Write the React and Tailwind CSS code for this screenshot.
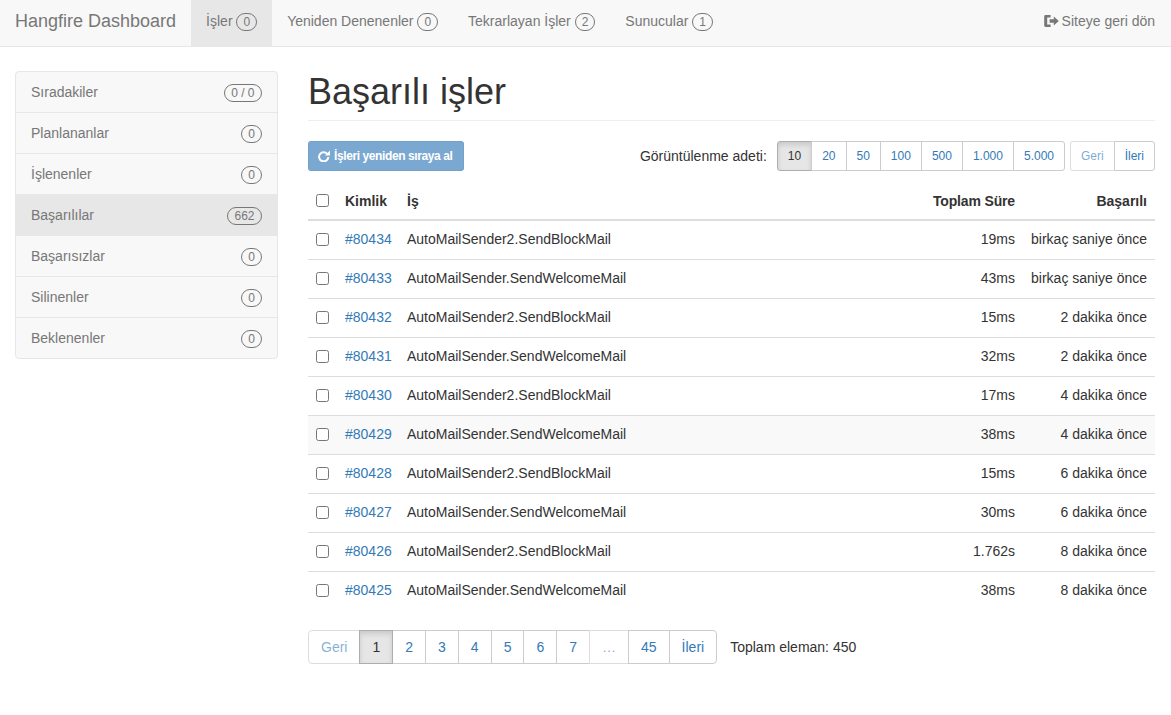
import React from "react";

const Badge = ({ children }) => (
  <span className={`mt-[2px] inline-block min-w-[10px] rounded-[10px] border border-[#777] bg-transparent py-0 text-center text-[12px] leading-[16px] text-[#777] ${String(children).length > 1 ? "px-[6.5px]" : "px-[6px]"}`}>
    {children}
  </span>
);

const LogOut = () => (
  <svg width="15" height="14" viewBox="0 0 15 14" className="mb-[1px] inline-block" fill="#777">
    <path d="M1.6 1h5v2.4H3.2v7.2h3.4V13h-5a1.4 1.4 0 0 1-1.4-1.4V2.4A1.4 1.4 0 0 1 1.6 1z" />
    <path d="M5.6 5.2h4.2V2.6L14.8 7l-5 4.4V8.8H5.6z" />
  </svg>
);

const Repeat = () => (
  <svg width="12" height="12" viewBox="0 0 12 12" className="inline-block" fill="none">
    <path d="M9.6 4.3A4.6 4.6 0 1 0 10.3 7" stroke="#fff" strokeWidth="2" />
    <path d="M12 .6v5H7z" fill="#fff" />
  </svg>
);

const nav = [
  ["İşler", "0", true],
  ["Yeniden Denenenler", "0"],
  ["Tekrarlayan İşler", "2"],
  ["Sunucular", "1"],
];

const side = [
  ["Sıradakiler", "0 / 0"],
  ["Planlananlar", "0"],
  ["İşlenenler", "0"],
  ["Başarılılar", "662", true],
  ["Başarısızlar", "0"],
  ["Silinenler", "0"],
  ["Beklenenler", "0"],
];

const rows = [
  ["#80434", "AutoMailSender2.SendBlockMail", "19ms", "birkaç saniye önce"],
  ["#80433", "AutoMailSender.SendWelcomeMail", "43ms", "birkaç saniye önce"],
  ["#80432", "AutoMailSender2.SendBlockMail", "15ms", "2 dakika önce"],
  ["#80431", "AutoMailSender.SendWelcomeMail", "32ms", "2 dakika önce"],
  ["#80430", "AutoMailSender2.SendBlockMail", "17ms", "4 dakika önce"],
  ["#80429", "AutoMailSender.SendWelcomeMail", "38ms", "4 dakika önce"],
  ["#80428", "AutoMailSender2.SendBlockMail", "15ms", "6 dakika önce"],
  ["#80427", "AutoMailSender.SendWelcomeMail", "30ms", "6 dakika önce"],
  ["#80426", "AutoMailSender2.SendBlockMail", "1.762s", "8 dakika önce"],
  ["#80425", "AutoMailSender.SendWelcomeMail", "38ms", "8 dakika önce"],
];

const sizes = ["10", "20", "50", "100", "500", "1.000", "5.000"];
const pages = ["Geri", "1", "2", "3", "4", "5", "6", "7", "…", "45", "İleri"];

const pageClass = (p) => {
  if (p === "1") return "bg-[#e6e6e6] border-[#adadad] text-[#333] shadow-[inset_0_3px_5px_rgba(0,0,0,0.125)] z-10";
  if (p === "Geri" || p === "…") return "bg-white border-[#ddd] text-[#337ab7]/60";
  return "bg-white border-[#ccc] text-[#337ab7]";
};

export default function App() {
  return (
    <div className="min-h-[715px] bg-white font-['Liberation_Sans',Arial,sans-serif] text-[14px] leading-[20px] text-[#333]">
      <nav className="flex h-[47px] border-b border-[#e7e7e7] bg-[#f8f8f8] pl-[15px] pr-[16px]">
        <div className="mr-[15px] pt-[11px] text-[18px] leading-[20px] text-[#777]">Hangfire Dashboard</div>
        {nav.map(([label, count, active]) => (
          <div key={label} className={`flex items-center gap-[3.89px] px-[15px] pb-[4px] text-[#777] ${active ? "bg-[#e7e7e7] text-[#555]" : ""}`}>
            <span>{label}</span>
            <Badge>{count}</Badge>
          </div>
        ))}
        <div className="ml-auto flex items-center gap-[3px] pb-[4px] text-[#777]">
          <LogOut />
          <span>Siteye geri dön</span>
        </div>
      </nav>

      <div className="flex pl-[15px] pr-[16px] pt-[24px]">
        <aside className="w-[263px] shrink-0 self-start overflow-hidden rounded-[4px] border border-[#e7e7e7] bg-[#f8f8f8]">
          {side.map(([label, count, active], i) => (
            <div
              key={label}
              className={`flex items-center justify-between px-[15px] text-[#777] ${i > 0 ? "h-[41px] border-t border-[#e7e7e7]" : "h-[40px]"} ${active ? "bg-[#e7e7e7] text-[#555]" : ""}`}
            >
              <span>{label}</span>
              <Badge>{count}</Badge>
            </div>
          ))}
        </aside>

        <main className="ml-[30px] min-w-0 flex-1">
          <h1 className="mb-[20px] border-b border-[#eee] pb-[8px] pt-[1px] text-[36px] font-medium leading-[39.6px] text-[#333]">
            Başarılı işler
          </h1>

          <div className="mb-[10px] flex h-[30px] items-center">
            <button className="flex h-[30px] w-[156px] items-center gap-[4px] whitespace-nowrap rounded-[3px] border border-[#2e6da4]/10 bg-[#337ab7]/65 pl-[9px] text-[12px] font-bold leading-[18px] text-white">
              <Repeat />
              <span className="tracking-[-0.4px]">İşleri yeniden sıraya al</span>
            </button>
            <span className="ml-auto mr-[10px]">Görüntülenme adeti:</span>
            <div className="flex">
              {sizes.map((s, i) => (
                <div
                  key={s}
                  className={`-ml-px flex h-[30px] items-center border px-[10px] text-[12px] leading-[18px] first:ml-0 first:rounded-l-[3px] last:rounded-r-[3px] ${
                    i === 0
                      ? "border-[#adadad] bg-[#e6e6e6] text-[#333] shadow-[inset_0_3px_5px_rgba(0,0,0,0.125)]"
                      : "border-[#ccc] bg-white text-[#337ab7]"
                  }`}
                >
                  {s}
                </div>
              ))}
            </div>
            <div className="ml-[5px] flex">
              <div className="flex h-[30px] items-center rounded-l-[3px] border border-[#ccc]/65 bg-white px-[10px] text-[12px] text-[#337ab7]/65">Geri</div>
              <div className="-ml-px flex h-[30px] items-center rounded-r-[3px] border border-[#ccc] bg-white px-[10px] text-[12px] text-[#337ab7]">İleri</div>
            </div>
          </div>

          <table className="w-full table-fixed border-collapse">
            <thead>
              <tr className="h-[39px] border-b-2 border-[#ddd]">
                <th className="w-[29px] p-0 pb-[1px] text-center align-middle">
                  <input type="checkbox" className="align-middle" />
                </th>
                <th className="w-[62px] px-[8px] pb-0 pt-[2px] text-left font-bold">Kimlik</th>
                <th className="px-[8px] pb-0 pt-[2px] text-left font-bold">İş</th>
                <th className="w-[120px] px-[8px] pb-0 pt-[2px] text-right font-bold tracking-[-0.15px]">Toplam Süre</th>
                <th className="w-[132px] px-[8px] pb-0 pt-[2px] text-right font-bold">Başarılı</th>
              </tr>
            </thead>
            <tbody>
              {rows.map(([id, job, dur, when], i) => {
                const cell = i === 0 ? "pb-[1px]" : "pb-[2px]";
                return (
                  <tr key={id} className={`${i === 0 ? "h-[40px]" : "h-[39px] border-t border-[#ddd]"} ${i === 5 ? "bg-[#f9f9f9]" : ""}`}>
                    <td className={`p-0 text-center align-middle ${i === 0 ? "pb-[3px]" : "pb-[4px]"}`}>
                      <input type="checkbox" className="align-middle" />
                    </td>
                    <td className={`px-[8px] pt-0 text-[#337ab7] ${cell}`}>{id}</td>
                    <td className={`px-[8px] pt-0 ${cell}`}>{job}</td>
                    <td className={`px-[8px] pt-0 text-right ${cell}`}>{dur}</td>
                    <td className={`whitespace-nowrap px-[8px] pt-0 text-right ${cell}`}>{when}</td>
                  </tr>
                );
              })}
            </tbody>
          </table>

          <div className="mt-[19px] flex items-center">
            <div className="flex">
              {pages.map((p) => (
                <div
                  key={p}
                  className={`relative -ml-px flex h-[34px] items-center border px-[12px] first:ml-0 first:rounded-l-[4px] last:rounded-r-[4px] ${pageClass(p)}`}
                >
                  {p}
                </div>
              ))}
            </div>
            <span className="ml-[13px]">Toplam eleman: 450</span>
          </div>
        </main>
      </div>
    </div>
  );
}
